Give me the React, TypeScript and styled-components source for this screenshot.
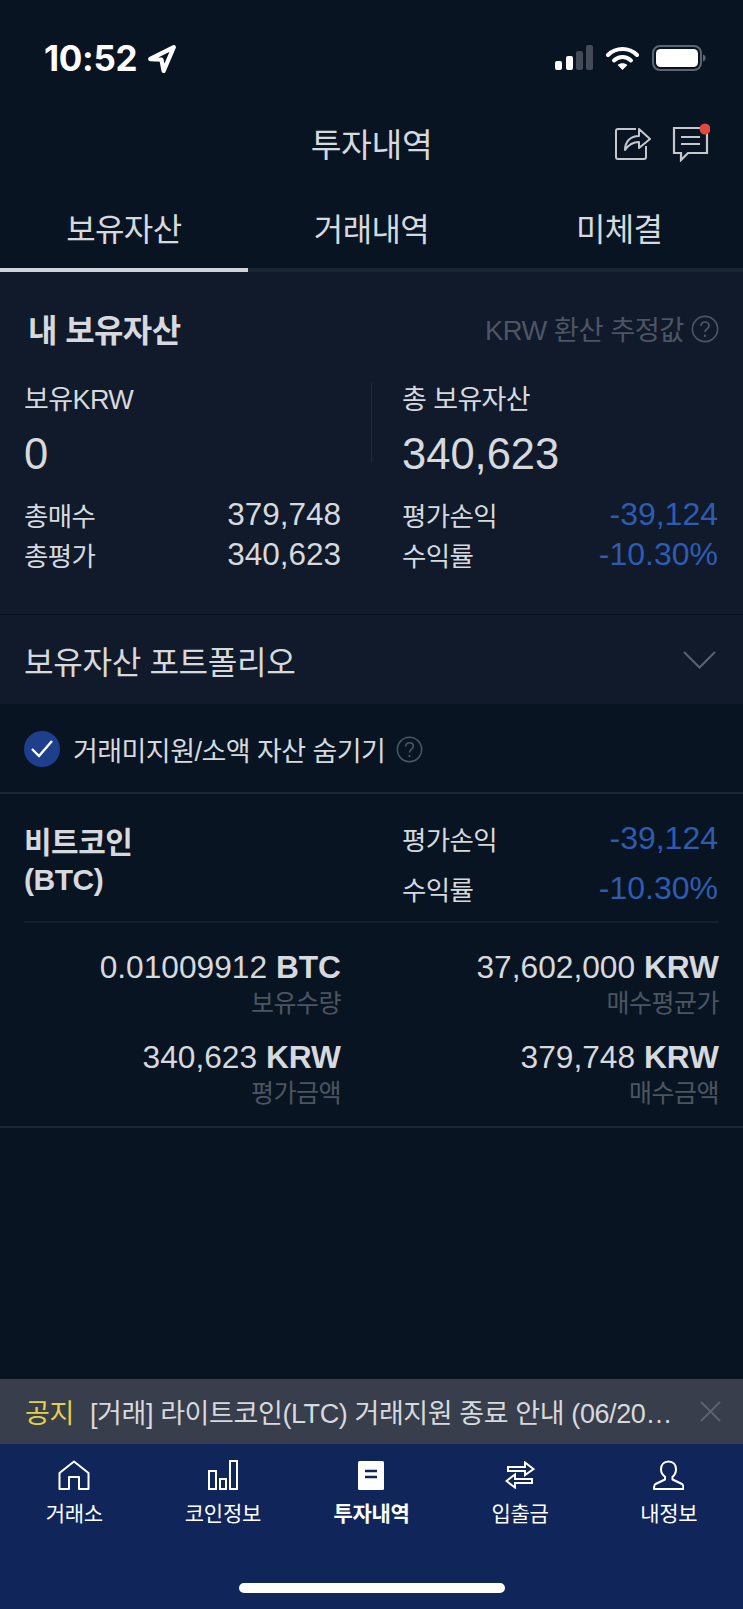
import React from "react";
import styled, { createGlobalStyle } from "styled-components";

const Global = createGlobalStyle`
  html, body { margin: 0; padding: 0; background: #091422; }
  * { box-sizing: border-box; }
`;

const FONT = `"Liberation Sans", "Noto Sans CJK KR", sans-serif`;

const Page = styled.div`
  width: 743px;
  height: 1609px;
  display: flex;
  flex-direction: column;
  background: #091422;
  color: #d6d9dd;
  font-family: ${FONT};
  overflow: hidden;
`;

const StatusBar = styled.div`
  height: 116px;
  display: flex;
  justify-content: space-between;
  align-items: center;
  padding: 0 37px 0 44px;
`;
const Time = styled.div`
  display: flex;
  align-items: center;
  gap: 10px;
  font-family: "Inter", "Liberation Sans", sans-serif;
  font-size: 35px;
  font-weight: 700;
  color: #fff;
  letter-spacing: -0.3px;
`;
const StatusIcons = styled.div`
  display: flex;
  align-items: center;
  gap: 13px;
`;

const TitleBar = styled.div`
  height: 52px;
  position: relative;
  display: flex;
  align-items: center;
  justify-content: center;
  font-size: 33.5px;
  letter-spacing: -0.4px;
  margin-bottom: 22px;
`;
const HeaderActions = styled.div`
  position: absolute;
  right: 33px;
  top: 7px;
  display: flex;
  align-items: flex-start;
  gap: 21px;
`;

const Tabs = styled.div`
  display: grid;
  grid-template-columns: repeat(3, 1fr);
  height: 82px;
  border-bottom: 4px solid #1c2533;
`;
const Tab = styled.div<{ $active?: boolean }>`
  display: flex;
  align-items: center;
  justify-content: center;
  font-size: 32px;
  letter-spacing: -0.6px;
  padding-bottom: 4px;
  height: 82px;
  border-bottom: 4px solid ${(p) => (p.$active ? "#d0d4da" : "transparent")};
`;

const Panel = styled.section`
  background: #101a2b;
  height: 343px;
  padding: 28px 24px 0;
  border-bottom: 1px solid #0a111d;
`;
const PanelHead = styled.div`
  height: 56px;
  display: flex;
  align-items: center;
  justify-content: space-between;
  margin-bottom: 26px;
`;
const PanelTitle = styled.h2`
  margin: 0 0 0 4px;
  font-size: 32px;
  font-weight: 700;
  letter-spacing: -0.6px;
`;
const Hint = styled.div`
  display: flex;
  align-items: center;
  gap: 7px;
  color: #4c5564;
  font-size: 27.3px;
  letter-spacing: -0.5px;
  svg {
    margin-top: 2px;
  }
`;

const Balances = styled.div`
  display: grid;
  grid-template-columns: 317px 1px 1fr;
  column-gap: 30px;
  height: 112px;
`;
const Divider = styled.div`
  width: 1px;
  height: 80px;
  margin-top: 1px;
  background: #1f2a3b;
`;
const BalanceLabel = styled.div`
  height: 36px;
  line-height: 36px;
  font-size: 27px;
  letter-spacing: -0.6px;
`;
const BalanceValue = styled.div`
  margin-top: 8px;
  height: 56px;
  line-height: 56px;
  font-size: 43.5px;
`;

const Stats = styled.div`
  display: grid;
  grid-template-columns: 317px 1fr;
  column-gap: 61px;
`;
const StatRow = styled.div<{ $h?: number }>`
  display: flex;
  justify-content: space-between;
  align-items: center;
  height: ${(p) => p.$h ?? 40}px;
`;
const StatLabel = styled.span`
  font-size: 26.5px;
  letter-spacing: -0.6px;
`;
const StatValue = styled.span<{ $blue?: boolean }>`
  font-size: ${(p) => (p.$blue ? 32 : 31.5)}px;
  color: ${(p) => (p.$blue ? "#2d5cb0" : "#d6d9dd")};
  margin-right: ${(p) => (p.$blue ? 1 : 0)}px;
`;

const Accordion = styled.div`
  height: 89px;
  background: #101a2b;
  padding: 0 27px 0 24px;
  display: flex;
  align-items: center;
  justify-content: space-between;
  font-size: 32.2px;
  letter-spacing: -0.4px;
`;

const CheckRow = styled.div`
  height: 90px;
  display: flex;
  align-items: center;
  padding: 2px 0 0 24px;
  border-bottom: 2px solid #1c2533;
  font-size: 27px;
  letter-spacing: -0.55px;
`;
const Check = styled.div`
  width: 36px;
  height: 36px;
  border-radius: 50%;
  background: #1d3f8c;
  display: flex;
  align-items: center;
  justify-content: center;
  margin-right: 13px;
`;
const CheckLabel = styled.span`
  margin-right: 11px;
`;

const Coin = styled.section`
  padding: 0 24px;
  border-bottom: 2px solid #1c2533;
  height: 334px;
`;
const CoinHead = styled.div`
  display: grid;
  grid-template-columns: 317px 1fr;
  column-gap: 61px;
  height: 129px;
  padding-top: 19px;
  border-bottom: 2px solid #141e2c;
`;
const CoinName = styled.div`
  font-size: 30px;
  font-weight: 700;
  line-height: 36.5px;
  letter-spacing: -0.5px;
  padding-top: 12px;
`;
const Details = styled.div`
  display: grid;
  grid-template-columns: 317px 1fr;
  column-gap: 61px;
  row-gap: 18px;
  padding-top: 26px;
`;
const Detail = styled.div`
  text-align: right;
`;
const DetailValue = styled.div`
  font-size: 31.7px;
  line-height: 36px;
  b {
    font-weight: 700;
  }
`;
const DetailLabel = styled.div`
  font-size: 25px;
  line-height: 36px;
  color: #4c5461;
  letter-spacing: -0.5px;
`;

const Spacer = styled.div`
  flex: 1;
`;

const Notice = styled.div`
  height: 65px;
  background: #383e4b;
  display: flex;
  align-items: center;
  padding-left: 25px;
  font-size: 27px;
  letter-spacing: -0.4px;
`;
const NoticeTag = styled.span`
  color: #e4d04c;
  width: 65px;
  flex: none;
`;
const NoticeText = styled.span`
  width: 590px;
  flex: none;
  white-space: nowrap;
  overflow: hidden;
`;
const NoticeClose = styled.div`
  margin-left: 20px;
  display: flex;
`;

const Nav = styled.nav`
  position: relative;
  height: 165px;
  background: #10265a;
  display: grid;
  grid-template-columns: repeat(5, 1fr);
  align-items: start;
  padding-top: 14px;
`;
const NavItem = styled.div<{ $active?: boolean }>`
  display: flex;
  flex-direction: column;
  align-items: center;
  color: #fff;
  font-size: 21px;
  letter-spacing: -0.3px;
  font-weight: ${(p) => (p.$active ? 700 : 400)};
`;
const NavIcon = styled.div`
  height: 34px;
  display: flex;
  align-items: center;
  justify-content: center;
  margin-bottom: 5px;
`;
const HomeBar = styled.div`
  position: absolute;
  left: 239px;
  bottom: 16px;
  width: 266px;
  height: 10px;
  border-radius: 5px;
  background: #fff;
`;

const Help = ({ size, color }: { size: number; color: string }) => (
  <svg width={size} height={size} viewBox="0 0 28 28" fill="none">
    <circle cx="14" cy="14" r="12.6" stroke={color} strokeWidth="1.6" />
    <path d="M10 11c0-2.600 1.800-4 4-4s4 1.400 4 3.700c0 3.200-4 3.300-4 6.300" stroke={color} strokeWidth="1.700" />
    <circle cx="14" cy="20.800" r="1.200" fill={color} />
  </svg>
);

const Icons = {
  Location: () => (
    <svg width="30" height="29" viewBox="0 0 28 27" fill="none">
      <path d="M3 14 25 3 15.500 25 13.500 14.500z" stroke="#fff" strokeWidth="4" strokeLinejoin="round" />
    </svg>
  ),
  Signal: () => (
    <svg width="38" height="26" viewBox="0 0 38 26">
      <rect x="0" y="16" width="7" height="9" rx="2" fill="#fff" />
      <rect x="11" y="11" width="7" height="14" rx="2" fill="#fff" />
      <rect x="21" y="6" width="7" height="19" rx="2" fill="#434b58" />
      <rect x="31" y="0" width="7" height="25" rx="2" fill="#434b58" />
    </svg>
  ),
  Wifi: () => (
    <svg width="33" height="24" viewBox="0 0 33 24" fill="none">
      <path d="M2 9c8-8 21-8 29 0" stroke="#fff" strokeWidth="4" strokeLinecap="round" />
      <path d="M8 14.500c5-4.600 12-4.600 17 0" stroke="#fff" strokeWidth="4" strokeLinecap="round" />
      <path d="M16.500 24 11.600 19c2.800-2.200 7-2.200 9.800 0z" fill="#fff" />
    </svg>
  ),
  Battery: () => (
    <svg width="54" height="26" viewBox="0 0 54 26">
      <rect x="1" y="1" width="48" height="24" rx="7" fill="none" stroke="#5d6572" strokeWidth="2" />
      <rect x="4" y="4" width="42" height="18" rx="4.500" fill="#fff" />
      <path d="M51 9.500c1.600.4 2.600 1.800 2.600 3.500s-1 3.100-2.600 3.500z" fill="#5d6572" />
    </svg>
  ),
  Share: () => (
    <svg width="36" height="37" viewBox="0 0 36 37" fill="none">
      <path d="M21 6H3a2 2 0 0 0-2 2v26a2 2 0 0 0 2 2h26a2 2 0 0 0 2-2V23" stroke="#c4c8ce" strokeWidth="2" />
      <path d="M10 27c0-8 5-14 14-14V6l11 10-11 9v-6c-6 0-10 2-14 8z" stroke="#c4c8ce" strokeWidth="2" strokeLinejoin="round" />
    </svg>
  ),
  Chat: () => (
    <svg width="38" height="39" viewBox="0 0 38 39" fill="none">
      <path d="M2 5h33v25H16l-7 7v-7H2z" stroke="#c4c8ce" strokeWidth="2.200" />
      <path d="M9 14h19M9 21h19" stroke="#c4c8ce" strokeWidth="2" />
      <circle cx="33" cy="6" r="5.500" fill="#df4a3c" />
    </svg>
  ),
  Chevron: () => (
    <svg width="33" height="18" viewBox="0 0 33 18" fill="none">
      <path d="M1 1l15.500 15.500L32 1" stroke="#5a6270" strokeWidth="2" />
    </svg>
  ),
  Tick: () => (
    <svg width="24" height="20" viewBox="0 0 24 20" fill="none">
      <path d="M2 10l7 7L22 2" stroke="#fff" strokeWidth="2.400" />
    </svg>
  ),
  Close: () => (
    <svg width="21" height="21" viewBox="0 0 21 21" fill="none">
      <path d="M1 1l19 19M20 1 1 20" stroke="#5c626e" strokeWidth="2" />
    </svg>
  ),
  Home: () => (
    <svg width="32" height="30" viewBox="0 0 32 30" fill="none">
      <path d="M1.500 13 16 1.500 30.500 13v16H21V17H11v12H1.500z" stroke="#fff" strokeWidth="2" strokeLinejoin="round" />
    </svg>
  ),
  Bars: () => (
    <svg width="30" height="30" viewBox="0 0 30 30" fill="none" stroke="#fff" strokeWidth="2">
      <rect x="1" y="11" width="7" height="18" />
      <rect x="12" y="19" width="6" height="10" />
      <rect x="22" y="1" width="7" height="28" />
    </svg>
  ),
  Doc: () => (
    <svg width="26" height="29" viewBox="0 0 26 29">
      <rect width="26" height="29" rx="1.500" fill="#fff" />
      <path d="M7 10h12M7 16h12" stroke="#10265a" strokeWidth="2.600" />
    </svg>
  ),
  Transfer: () => (
    <svg width="30" height="28" viewBox="0 0 30 28" fill="none" stroke="#fff" strokeWidth="2">
      <path d="M3 6h17V1.500L28.500 8 20 14v-4H3z" />
      <path d="M27 18H10v-4.500L1.500 20 10 26.500V22h17z" />
    </svg>
  ),
  User: () => (
    <svg width="31" height="30" viewBox="0 0 31 30" fill="none">
      <path d="M15.500 1.500c4.800 0 7.500 3.500 7.500 7.800 0 3.500-1.500 6-3.500 7.500v2.700l9.500 4.500c1 .6 1.500 2 1.500 5H1c0-3 .5-4.400 1.500-5l9.500-4.500v-2.700C10 15.300 8 12.800 8 9.300c0-4.300 2.700-7.800 7.500-7.800z" stroke="#fff" strokeWidth="2" strokeLinejoin="round" />
    </svg>
  ),
};

const navItems = [
  { label: "거래소", icon: <Icons.Home /> },
  { label: "코인정보", icon: <Icons.Bars /> },
  { label: "투자내역", icon: <Icons.Doc />, active: true },
  { label: "입출금", icon: <Icons.Transfer /> },
  { label: "내정보", icon: <Icons.User /> },
];

const details = [
  { value: "0.01009912", unit: "BTC", label: "보유수량" },
  { value: "37,602,000", unit: "KRW", label: "매수평균가" },
  { value: "340,623", unit: "KRW", label: "평가금액" },
  { value: "379,748", unit: "KRW", label: "매수금액" },
];

export default function App() {
  return (
    <Page>
      <Global />
      <StatusBar>
        <Time>
          10:52
          <Icons.Location />
        </Time>
        <StatusIcons>
          <Icons.Signal />
          <Icons.Wifi />
          <Icons.Battery />
        </StatusIcons>
      </StatusBar>

      <TitleBar>
        투자내역
        <HeaderActions>
          <Icons.Share />
          <Icons.Chat />
        </HeaderActions>
      </TitleBar>

      <Tabs>
        <Tab $active>보유자산</Tab>
        <Tab>거래내역</Tab>
        <Tab>미체결</Tab>
      </Tabs>

      <Panel>
        <PanelHead>
          <PanelTitle>내 보유자산</PanelTitle>
          <Hint>
            KRW 환산 추정값
            <Help size={28} color="#4c5564" />
          </Hint>
        </PanelHead>
        <Balances>
          <div>
            <BalanceLabel>보유KRW</BalanceLabel>
            <BalanceValue>0</BalanceValue>
          </div>
          <Divider />
          <div>
            <BalanceLabel>총 보유자산</BalanceLabel>
            <BalanceValue>340,623</BalanceValue>
          </div>
        </Balances>
        <Stats>
          <StatRow>
            <StatLabel>총매수</StatLabel>
            <StatValue>379,748</StatValue>
          </StatRow>
          <StatRow>
            <StatLabel>평가손익</StatLabel>
            <StatValue $blue>-39,124</StatValue>
          </StatRow>
          <StatRow>
            <StatLabel>총평가</StatLabel>
            <StatValue>340,623</StatValue>
          </StatRow>
          <StatRow>
            <StatLabel>수익률</StatLabel>
            <StatValue $blue>-10.30%</StatValue>
          </StatRow>
        </Stats>
      </Panel>

      <Accordion>
        보유자산 포트폴리오
        <Icons.Chevron />
      </Accordion>

      <CheckRow>
        <Check>
          <Icons.Tick />
        </Check>
        <CheckLabel>거래미지원/소액 자산 숨기기</CheckLabel>
        <Help size={27} color="#4c5564" />
      </CheckRow>

      <Coin>
        <CoinHead>
          <CoinName>
            비트코인
            <br />
            (BTC)
          </CoinName>
          <div>
            <StatRow $h={50}>
              <StatLabel>평가손익</StatLabel>
              <StatValue $blue>-39,124</StatValue>
            </StatRow>
            <StatRow $h={50}>
              <StatLabel>수익률</StatLabel>
              <StatValue $blue>-10.30%</StatValue>
            </StatRow>
          </div>
        </CoinHead>
        <Details>
          {details.map((d) => (
            <Detail key={d.label}>
              <DetailValue>
                {d.value} <b>{d.unit}</b>
              </DetailValue>
              <DetailLabel>{d.label}</DetailLabel>
            </Detail>
          ))}
        </Details>
      </Coin>

      <Spacer />

      <Notice>
        <NoticeTag>공지</NoticeTag>
        <NoticeText>[거래] 라이트코인(LTC) 거래지원 종료 안내 (06/20…</NoticeText>
        <NoticeClose>
          <Icons.Close />
        </NoticeClose>
      </Notice>

      <Nav>
        {navItems.map((n) => (
          <NavItem key={n.label} $active={n.active}>
            <NavIcon>{n.icon}</NavIcon>
            {n.label}
          </NavItem>
        ))}
        <HomeBar />
      </Nav>
    </Page>
  );
}
